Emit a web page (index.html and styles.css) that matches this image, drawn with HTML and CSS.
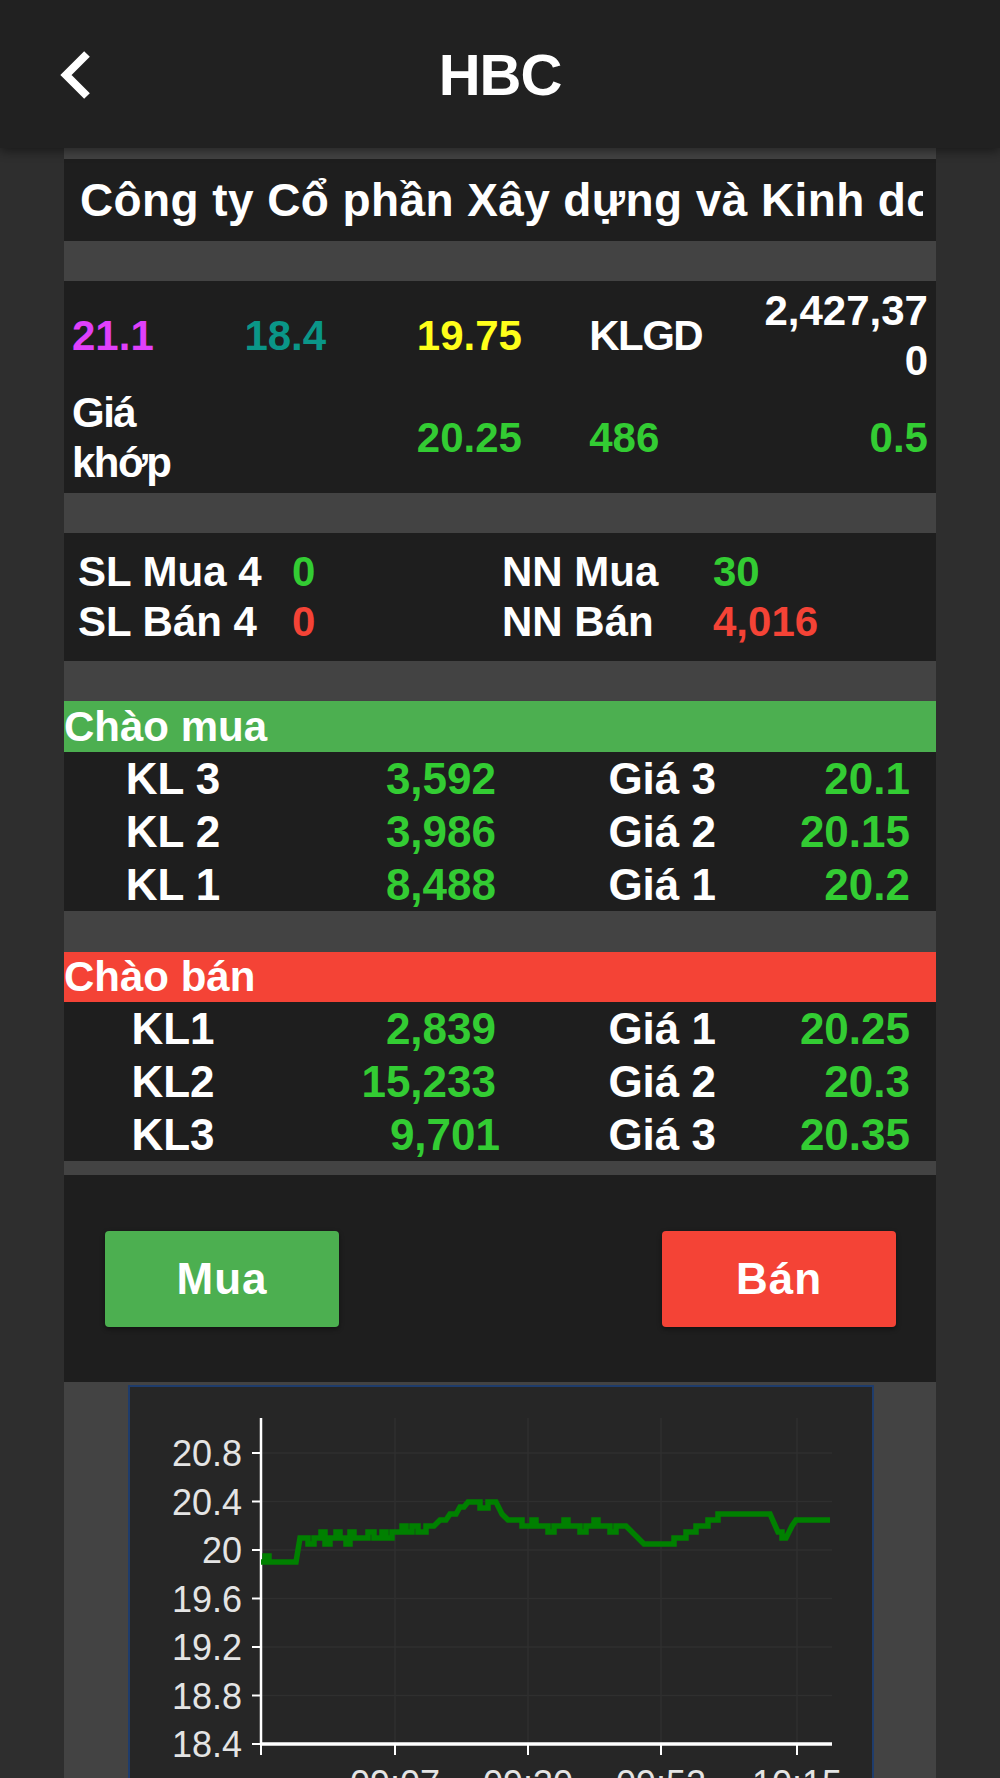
FILE: index.html
```html
<!DOCTYPE html>
<html lang="vi">
<head>
<meta charset="utf-8">
<title>HBC</title>
<link rel="stylesheet" href="styles.css">
</head>
<body>
<header class="nav">
  <div class="nav-left">
    <svg class="back" width="50" height="70" viewBox="0 0 50 70" aria-label="Quay lại">
      <polyline points="37,15 16,36 37,57" fill="none" stroke="#ffffff" stroke-width="8" stroke-linejoin="miter" stroke-linecap="butt"/>
    </svg>
  </div>
  <h1 class="title">HBC</h1>
  <div class="nav-right"></div>
</header>

<main class="panel">
  <section class="company">
    <div class="company-name">Công ty Cổ phần Xây dựng và Kinh doanh Địa ốc Hòa Bình</div>
  </section>

  <section class="quote">
    <div class="q-cell ceil">21.1</div>
    <div class="q-cell floor">18.4</div>
    <div class="q-cell ref">19.75</div>
    <div class="q-cell q-label">KLGD</div>
    <div class="q-cell right">2,427,370</div>
    <div class="q-cell q-label">Giá khớp</div>
    <div class="q-cell"></div>
    <div class="q-cell up">20.25</div>
    <div class="q-cell up">486</div>
    <div class="q-cell up right">0.5</div>
  </section>

  <section class="stats">
    <div class="s-label">SL Mua 4</div>
    <div class="s-val up">0</div>
    <div class="s-label">NN Mua</div>
    <div class="s-val up">30</div>
    <div class="s-label">SL Bán 4</div>
    <div class="s-val down">0</div>
    <div class="s-label">NN Bán</div>
    <div class="s-val down">4,016</div>
  </section>

  <section class="book">
    <div class="book-head buy">Chào mua</div>
    <div class="book-rows">
      <div class="b-kl">KL 3</div><div class="b-vol up">3,592</div><div class="b-gia">Giá 3</div><div class="b-price up">20.1</div>
      <div class="b-kl">KL 2</div><div class="b-vol up">3,986</div><div class="b-gia">Giá 2</div><div class="b-price up">20.15</div>
      <div class="b-kl">KL 1</div><div class="b-vol up">8,488</div><div class="b-gia">Giá 1</div><div class="b-price up">20.2</div>
    </div>
  </section>

  <section class="book sell-book">
    <div class="book-head sell">Chào bán</div>
    <div class="book-rows">
      <div class="b-kl">KL1</div><div class="b-vol up">2,839</div><div class="b-gia">Giá 1</div><div class="b-price up">20.25</div>
      <div class="b-kl">KL2</div><div class="b-vol up">15,233</div><div class="b-gia">Giá 2</div><div class="b-price up">20.3</div>
      <div class="b-kl">KL3</div><div class="b-vol up shift">9,701</div><div class="b-gia">Giá 3</div><div class="b-price up">20.35</div>
    </div>
  </section>

  <section class="actions">
    <button class="btn btn-buy" type="button">Mua</button>
    <button class="btn btn-sell" type="button">Bán</button>
  </section>

  <section class="chart-wrap">
    <div class="chart">
      <svg class="chart-svg" width="742" height="426" viewBox="2 2 742 426">
        <g class="grid" stroke="#2f2f2f" stroke-width="1.5">
          <line x1="133" y1="68" x2="704" y2="68"/>
          <line x1="133" y1="116.5" x2="704" y2="116.5"/>
          <line x1="133" y1="165" x2="704" y2="165"/>
          <line x1="133" y1="213.5" x2="704" y2="213.5"/>
          <line x1="133" y1="262" x2="704" y2="262"/>
          <line x1="133" y1="310.5" x2="704" y2="310.5"/>
          <line x1="267" y1="33" x2="267" y2="359"/>
          <line x1="400" y1="33" x2="400" y2="359"/>
          <line x1="533" y1="33" x2="533" y2="359"/>
          <line x1="669" y1="33" x2="669" y2="359"/>
        </g>
        <g class="ticks" stroke="#ffffff" stroke-width="2">
          <line x1="124" y1="68" x2="133" y2="68"/>
          <line x1="124" y1="116.5" x2="133" y2="116.5"/>
          <line x1="124" y1="165" x2="133" y2="165"/>
          <line x1="124" y1="213.5" x2="133" y2="213.5"/>
          <line x1="124" y1="262" x2="133" y2="262"/>
          <line x1="124" y1="310.5" x2="133" y2="310.5"/>
          <line x1="124" y1="359" x2="133" y2="359"/>
          <line x1="133" y1="359" x2="133" y2="370"/>
          <line x1="267" y1="359" x2="267" y2="370"/>
          <line x1="400" y1="359" x2="400" y2="370"/>
          <line x1="533" y1="359" x2="533" y2="370"/>
          <line x1="669" y1="359" x2="669" y2="370"/>
        </g>
        <line x1="133" y1="33" x2="133" y2="360" stroke="#ffffff" stroke-width="2.5"/>
        <line x1="132" y1="359" x2="704" y2="359" stroke="#ffffff" stroke-width="3.5"/>
        <polyline fill="none" stroke="#008000" stroke-width="5.5" stroke-linejoin="miter"
          points="133,177 137,177 137,171 141,171 141,177 168,177 172,153 180,153 180,159 186,159 186,153 193,153 193,147 197,147 197,159 202,159 202,153 208,153 208,147 212,147 212,153 218,153 218,159 222,159 222,147 226,147 226,153 240,153 240,147 246,147 246,153 254,153 254,147 258,147 258,153 264,153 264,147 274,147 274,141 278,141 278,147 284,147 284,141 290,141 290,147 298,147 298,141 306,141 312,135 318,135 322,129 328,129 332,122 336,122 340,117 352,117 352,123 360,123 360,117 368,117 374,129 380,135 394,135 394,141 404,141 404,135 408,135 408,141 420,141 420,147 426,147 426,141 436,141 436,135 440,135 440,141 452,141 452,147 458,147 458,141 466,141 466,135 470,135 470,141 482,141 482,147 488,147 488,141 498,141 504,147 510,153 516,159 546,159 546,153 558,153 558,147 568,147 568,141 580,141 580,135 590,135 590,129 642,129 650,147 654,147 654,153 658,153 664,141 668,135 702,135"/>
        <g class="ylabels">
          <text x="114" y="81">20.8</text>
          <text x="114" y="129.5">20.4</text>
          <text x="114" y="178">20</text>
          <text x="114" y="226.5">19.6</text>
          <text x="114" y="275">19.2</text>
          <text x="114" y="323.5">18.8</text>
          <text x="114" y="372">18.4</text>
        </g>
        <g class="xlabels">
          <text x="267" y="411">09:07</text>
          <text x="400" y="411">09:30</text>
          <text x="533" y="411">09:52</text>
          <text x="669" y="411">10:15</text>
        </g>
      </svg>
    </div>
  </section>
</main>
</body>
</html>
```

FILE: styles.css
```css
html, body {
  margin: 0;
  padding: 0;
}

body {
  background: #2e2e2e;
  font-family: "Liberation Sans", Arial, sans-serif;
  font-weight: bold;
  color: #ffffff;
}

/* ---------- top navigation ---------- */
.nav {
  position: relative;
  z-index: 2;
  height: 148px;
  background: #212121;
  box-shadow: 0 3px 10px rgba(0, 0, 0, 0.45);
  display: grid;
  grid-template-columns: 1fr auto 1fr;
  align-items: center;
}

.nav-left {
  display: flex;
  align-items: center;
  padding-left: 50px;
}

.back {
  display: block;
}

.title {
  margin: 0;
  font-size: 58px;
  font-weight: bold;
  line-height: 1;
  letter-spacing: -1px;
  padding-top: 2px;
}

/* ---------- main panel ---------- */
.panel {
  margin: 0 64px;
  background: #434343;
  padding-top: 11px;
  display: flex;
  flex-direction: column;
}

.up { color: #33cc33; }
.down { color: #f44336; }
.ceil { color: #e040fb; }
.floor { color: #0a9688; }
.ref { color: #ffff1a; }

/* company name */
.company {
  height: 82px;
  background: #1e1e1e;
  display: flex;
  align-items: center;
  padding: 0 13px 0 16px;
  overflow: hidden;
}

.company-name {
  font-size: 46px;
  letter-spacing: 0.4px;
  white-space: nowrap;
  overflow: hidden;
  width: 100%;
}

/* quote grid */
.quote {
  margin-top: 40px;
  background: #1e1e1e;
  padding: 4px 5px;
  display: grid;
  grid-template-columns: repeat(5, 1fr);
  font-size: 42px;
  line-height: 50px;
}

.q-cell {
  padding: 1px 3px;
  min-height: 100px;
  display: flex;
  align-items: center;
  overflow-wrap: anywhere;
}

.q-label {
  letter-spacing: -1.5px;
}

.q-cell.right {
  justify-content: flex-end;
  text-align: right;
}

/* stats */
.stats {
  margin-top: 40px;
  background: #1e1e1e;
  padding: 14px 0 14px 14px;
  display: grid;
  grid-template-columns: 214px 210px 211px 1fr;
  font-size: 42px;
  line-height: 50px;
}

/* order book */
.book {
  margin-top: 40px;
  background: #1e1e1e;
}

.sell-book {
  margin-top: 41px;
}

.book-head {
  height: 51px;
  line-height: 51px;
  font-size: 42px;
  padding-left: 0;
}

.book-head.buy { background: #4caf50; }
.book-head.sell { background: #f44336; height: 50px; line-height: 50px; }

.book-rows {
  display: grid;
  grid-template-columns: 218px 218px 218px 218px;
  grid-auto-rows: 53px;
  font-size: 44px;
  line-height: 53px;
}

.b-kl { text-align: center; }
.b-vol { text-align: right; padding-right: 4px; }
.b-vol.shift { padding-right: 0; }
.b-gia { text-align: right; padding-right: 2px; }
.b-price { text-align: right; padding-right: 26px; }

/* actions */
.actions {
  margin-top: 14px;
  height: 207px;
  background: #1e1e1e;
  display: flex;
  justify-content: space-between;
  align-items: center;
  padding: 0 40px 0 41px;
}

.btn {
  width: 234px;
  height: 96px;
  border: none;
  border-radius: 4px;
  color: #ffffff;
  font-family: "Liberation Sans", Arial, sans-serif;
  font-weight: bold;
  font-size: 44px;
  letter-spacing: 1px;
  box-shadow: 0 2px 5px rgba(0, 0, 0, 0.45);
  padding: 0;
}

.btn-buy { background: #4caf50; }
.btn-sell { background: #f44336; }

/* chart */
.chart-wrap {
  padding-top: 3px;
}

.chart {
  margin: 0 62px 0 64px;
  border: 2px solid #1e3c6c;
  background: #262626;
  height: 426px;
  overflow: hidden;
}

.chart-svg {
  display: block;
}

.chart-svg text {
  font-family: "Liberation Sans", Arial, sans-serif;
  font-weight: normal;
  font-size: 36px;
  fill: #e4e4e4;
}

.ylabels text { text-anchor: end; }
.xlabels text { text-anchor: middle; }
```
